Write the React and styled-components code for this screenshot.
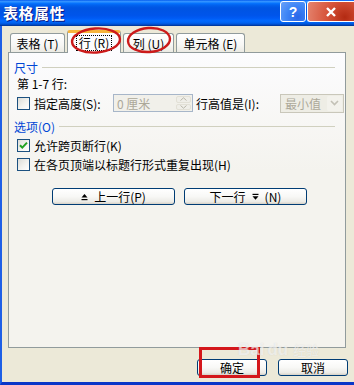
import React from "react";
import styled, { createGlobalStyle } from "styled-components";

const Global = createGlobalStyle`
  html, body {
    margin: 0;
    padding: 0;
    background: #ece9d8;
  }
  body {
    font-family: "Noto Sans CJK SC", "Liberation Sans", sans-serif;
    font-size: 12px;
    color: #000;
  }
`;

const ArrowUp = () => (
  <svg width="7" height="8" viewBox="0 0 7 8">
    <path d="M3.5 1 L6.5 4.5 L0.5 4.5 Z" fill="#000" />
    <rect x="0.5" y="6" width="6" height="1.2" fill="#000" />
  </svg>
);

const ArrowDown = () => (
  <svg width="7" height="8" viewBox="0 0 7 8">
    <rect x="0.5" y="0.8" width="6" height="1.2" fill="#000" />
    <path d="M0.5 3.3 L6.5 3.3 L3.5 6.8 Z" fill="#000" />
  </svg>
);

const Check = () => (
  <svg width="11" height="11" viewBox="0 0 11 11">
    <path d="M2 5.2 L4.3 7.6 L9 2.6" stroke="#21a121" strokeWidth="2" fill="none" />
  </svg>
);

const App = () => {
  return (
    <>
      <Global />
      <Window>
        <TitleBar>
          <Title>表格属性</Title>
          <TitleButtons>
            <HelpButton>?</HelpButton>
            <CloseButton>
              <svg width="12" height="12" viewBox="0 0 12 12">
                <path d="M2 2 L10 10 M10 2 L2 10" stroke="#fff" strokeWidth="2.4" />
              </svg>
            </CloseButton>
          </TitleButtons>
        </TitleBar>
        <Body>
          <TabStrip>
            <Tab $w={55}>表格 (T)</Tab>
            <Tab $w={54} $active>
              <Focus>行 (R)</Focus>
            </Tab>
            <Tab $w={51}>列 (U)</Tab>
            <Tab $w={69}>单元格 (E)</Tab>
            <Marks viewBox="0 0 180 30">
              <ellipse cx="94" cy="12.5" rx="24" ry="12" transform="rotate(-4 94 12.5)" stroke="#cc1a1a" strokeWidth="2.4" fill="none" />
              <ellipse cx="147" cy="12" rx="21" ry="12" transform="rotate(-4 147 12)" stroke="#cc1a1a" strokeWidth="2.4" fill="none" />
            </Marks>
          </TabStrip>
          <Panel>
            <GroupHeader>
              <GroupLabel>尺寸</GroupLabel>
              <GroupLine />
            </GroupHeader>
            <TextRow>第 1-7 行:</TextRow>
            <Row $h={20}>
              <CheckBox />
              <Label $w={79}>指定高度(S):</Label>
              <SpinBox>
                <DisabledText>0 厘米</DisabledText>
                <Spinner>
                  <SpinArrow>
                    <svg width="7" height="4" viewBox="0 0 7 4"><path d="M0.5 3.5 L3.5 0.8 L6.5 3.5" stroke="#b8b6aa" fill="none" /></svg>
                  </SpinArrow>
                  <SpinArrow>
                    <svg width="7" height="4" viewBox="0 0 7 4"><path d="M0.5 0.5 L3.5 3.2 L6.5 0.5" stroke="#b8b6aa" fill="none" /></svg>
                  </SpinArrow>
                </Spinner>
              </SpinBox>
              <Label $w={84} $pad={3}>行高值是(I):</Label>
              <Select>
                <DisabledText>最小值</DisabledText>
                <SelectArrow>
                  <svg width="9" height="6" viewBox="0 0 9 6"><path d="M1 1 L4.5 4.5 L8 1" stroke="#c3c1b6" strokeWidth="1.6" fill="none" /></svg>
                </SelectArrow>
              </Select>
            </Row>
            <GroupHeader $top={5}>
              <GroupLabel>选项(O)</GroupLabel>
              <GroupLine />
            </GroupHeader>
            <Row $h={19} $top={2}>
              <CheckBox>
                <Check />
              </CheckBox>
              <Label>允许跨页断行(K)</Label>
            </Row>
            <Row $h={19}>
              <CheckBox />
              <Label>在各页顶端以标题行形式重复出现(H)</Label>
            </Row>
            <ButtonRow>
              <Button $w={123}>
                <ArrowUp />
                <span>上一行(P)</span>
              </Button>
              <Button $w={123}>
                <span>下一行</span>
                <ArrowDown />
                <span>(N)</span>
              </Button>
            </ButtonRow>
          </Panel>
          <Footer>
            <Button $w={70}>确定</Button>
            <Button $w={70}>取消</Button>
            <RedBox />
            <Watermark>
              <b>Bai</b>
              <b>du</b>
              <small>经验</small>
            </Watermark>
          </Footer>
        </Body>
      </Window>
    </>
  );
};

const Window = styled.div`
  width: 354px;
  height: 385px;
  display: flex;
  flex-direction: column;
  overflow: hidden;
`;

const TitleBar = styled.div`
  height: 26px;
  flex: none;
  display: flex;
  align-items: flex-start;
  justify-content: space-between;
  background: linear-gradient(
    to bottom,
    #0058ee 0%,
    #3593ff 5%,
    #288eff 8%,
    #127dff 11%,
    #036ffc 14%,
    #0262ee 20%,
    #0057e5 28%,
    #0054e3 35%,
    #0055eb 60%,
    #005bf5 70%,
    #026afe 80%,
    #0062ef 88%,
    #0052d6 93%,
    #0040ab 97%,
    #003092 100%
  );
`;

const Title = styled.div`
  color: #fff;
  font-weight: bold;
  font-size: 15px;
  line-height: 26px;
  padding-left: 3px;
  letter-spacing: 0.5px;
  text-shadow: 1px 1px 0 #0a1883;
`;

const TitleButtons = styled.div`
  display: flex;
  gap: 1px;
  padding-top: 1px;
`;

const TitleBtn = styled.div`
  height: 19px;
  border: 1px solid #fff;
  border-radius: 3px;
  display: flex;
  align-items: center;
  justify-content: center;
  color: #fff;
  font-family: "Liberation Sans", sans-serif;
  font-weight: bold;
  font-size: 14px;
`;

const HelpButton = styled(TitleBtn)`
  width: 24px;
  background: radial-gradient(circle at 70% 80%, #2a66e8 0%, #3e85f6 50%, #6aa2f8 100%);
`;

const CloseButton = styled(TitleBtn)`
  width: 46px;
  border-right: none;
  border-radius: 3px 0 0 3px;
  background: radial-gradient(circle at 80% 80%, #b32a12 0%, #d6533a 45%, #e58671 100%);
`;

const Body = styled.div`
  flex: 1;
  position: relative;
  display: flex;
  flex-direction: column;
  background: #ece9d8;
  border-left: 2px solid #1e5fe6;
  border-bottom: 3px solid #0a36c8;
`;

const TabStrip = styled.div`
  position: relative;
  display: flex;
  align-items: flex-end;
  gap: 2px;
  height: 22px;
  margin-top: 4px;
  padding-left: 8px;
`;

const Tab = styled.div`
  width: ${(p) => p.$w}px;
  height: ${(p) => (p.$active ? 22 : 19)}px;
  box-sizing: border-box;
  display: flex;
  align-items: center;
  justify-content: center;
  white-space: nowrap;
  font-size: 12px;
  border: 1px solid #919b9c;
  border-bottom: none;
  border-radius: 3px 3px 0 0;
  background: ${(p) =>
    p.$active
      ? "#fcfcfe"
      : "linear-gradient(to bottom, #ffffff 0%, #f7f7f5 60%, #ebeae3 100%)"};
  ${(p) => (p.$active ? "border-top: 3px solid #f6b43c; margin-bottom: -1px; height: 23px; position: relative; z-index: 1;" : "")}
`;

const Focus = styled.span`
  border: 1px dotted #000;
  padding: 0 2px;
  line-height: 14px;
`;

const Marks = styled.svg`
  position: absolute;
  left: 0;
  top: -2px;
  width: 180px;
  height: 30px;
  overflow: visible;
  pointer-events: none;
  z-index: 2;
`;

const Panel = styled.div`
  width: 338px;
  height: 296px;
  box-sizing: border-box;
  margin-left: 6px;
  border: 1px solid #919b9c;
  background: linear-gradient(to bottom, #fcfcfe 0%, #f4f3ee 40%, #f4f3ee 100%);
  padding: 6px 0 0 0;
  display: flex;
  flex-direction: column;
`;

const GroupHeader = styled.div`
  height: 16px;
  margin-top: ${(p) => p.$top || 0}px;
  display: flex;
  align-items: center;
  gap: 4px;
  padding-left: 5px;
  padding-right: 10px;
`;

const GroupLabel = styled.span`
  color: #0046d5;
  font-size: 12px;
  white-space: nowrap;
`;

const GroupLine = styled.div`
  flex: 1;
  height: 1px;
  background: #d0d0bf;
`;

const TextRow = styled.div`
  height: 18px;
  line-height: 18px;
  padding-left: 8px;
`;

const Row = styled.div`
  height: ${(p) => p.$h}px;
  margin-top: ${(p) => p.$top || 0}px;
  display: flex;
  align-items: center;
  padding-left: 8px;
`;

const CheckBox = styled.div`
  width: 13px;
  height: 13px;
  box-sizing: border-box;
  flex: none;
  border: 1px solid #1c5180;
  background: linear-gradient(135deg, #dcdcd7 0%, #f3f3ef 55%, #ffffff 100%);
  display: flex;
  align-items: center;
  justify-content: center;
  margin-right: 4px;
`;

const Label = styled.span`
  white-space: nowrap;
  ${(p) => (p.$w ? `width: ${p.$w}px;` : "")}
  padding-left: ${(p) => p.$pad || 0}px;
  flex: none;
`;

const SpinBox = styled.div`
  width: 80px;
  height: 18px;
  box-sizing: border-box;
  flex: none;
  border: 1px solid #a7b6c9;
  background: #f1f0ea;
  display: flex;
  align-items: center;
  justify-content: space-between;
  padding: 0 1px 0 3px;
`;

const DisabledText = styled.span`
  color: #aca899;
  white-space: nowrap;
`;

const Spinner = styled.div`
  width: 15px;
  height: 14px;
  display: flex;
  flex-direction: column;
  gap: 1px;
`;

const SpinArrow = styled.div`
  flex: 1;
  border-radius: 2px;
  background: #efeee8;
  border: 1px solid #e2e0d6;
  display: flex;
  align-items: center;
  justify-content: center;
`;

const Select = styled.div`
  width: 64px;
  height: 19px;
  box-sizing: border-box;
  flex: none;
  border: 1px solid #c9c7ba;
  background: #eeede5;
  display: flex;
  align-items: center;
  justify-content: space-between;
  padding: 0 1px 0 4px;
`;

const SelectArrow = styled.div`
  width: 15px;
  height: 15px;
  border-radius: 2px;
  background: #f3f2ec;
  display: flex;
  align-items: center;
  justify-content: center;
`;

const ButtonRow = styled.div`
  display: flex;
  gap: 9px;
  margin-top: 14px;
  padding-left: 43px;
`;

const Button = styled.div`
  width: ${(p) => p.$w}px;
  height: 17px;
  box-sizing: border-box;
  border: 1px solid #003c74;
  border-radius: 3px;
  background: linear-gradient(to bottom, #ffffff 0%, #f8f8f6 50%, #ecebe6 85%, #d6d0c5 100%);
  display: flex;
  align-items: center;
  justify-content: center;
  gap: 6px;
  font-size: 12px;
  white-space: nowrap;
`;

const Footer = styled.div`
  position: relative;
  display: flex;
  justify-content: flex-end;
  gap: 11px;
  margin-top: 11px;
  padding-right: 6px;
`;

const RedBox = styled.div`
  position: absolute;
  left: 197px;
  top: -12px;
  width: 61px;
  height: 31px;
  box-sizing: border-box;
  border: 3px solid #d4171b;
  pointer-events: none;
`;

const Watermark = styled.div`
  position: absolute;
  left: 236px;
  top: -19px;
  display: flex;
  align-items: baseline;
  gap: 3px;
  font-family: "Liberation Sans", sans-serif;
  color: rgba(255, 255, 255, 0.6);
  text-shadow: 0 0 1px rgba(160, 160, 160, 0.35);
  pointer-events: none;
  b {
    font-size: 17px;
  }
  small {
    font-family: "Noto Sans CJK SC", sans-serif;
    font-size: 13px;
    margin-left: 2px;
  }
`;

export default App;
